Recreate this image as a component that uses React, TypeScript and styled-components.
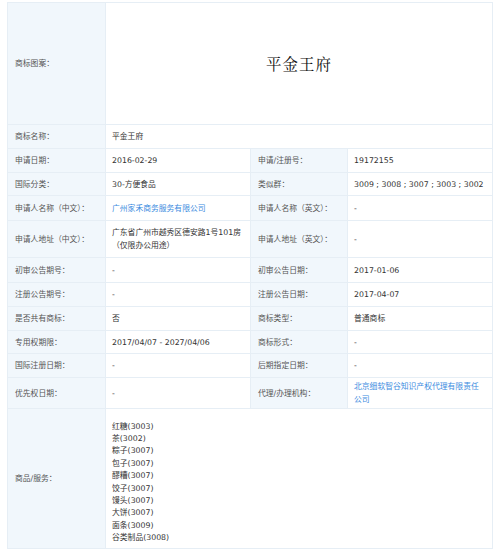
import React from "react";
import styled, { createGlobalStyle } from "styled-components";

const Global = createGlobalStyle`
  html, body { margin: 0; padding: 0; background: #ffffff; }
  body { font-family: "DejaVu Sans", "Noto Sans CJK SC", sans-serif; }
`;

const Page = styled.div`
  padding: 2px 8px 0 7px;
`;

const Table = styled.table`
  width: 485px;
  table-layout: fixed;
  border-collapse: collapse;
  font-family: "DejaVu Sans", "Noto Sans CJK SC", sans-serif;
  font-size: 7.8px;
  line-height: 13px;
`;

const Row = styled.tr<{ $h: number }>`
  height: ${(p) => p.$h}px;
`;

const LabelCell = styled.td`
  background: #f1f7fc;
  color: #555555;
  padding: 0 4px 0 7px;
  border: 1px solid #e6eef5;
  vertical-align: middle;
  white-space: nowrap;
`;

const ValueCell = styled.td`
  background: #ffffff;
  color: #333333;
  padding: 0 6px 0 6px;
  border: 1px solid #e6eef5;
  vertical-align: middle;
`;

const MarkCell = styled(ValueCell)`
  text-align: center;
  padding-top: 3px;
`;

const MarkText = styled.span`
  font-family: "Noto Serif CJK SC", "Noto Sans CJK SC", serif;
  font-size: 15.5px;
  color: #111111;
  letter-spacing: 1px;
`;

const Link = styled.span`
  color: #3b8be0;
`;

const GoodsList = styled.div`
  display: flex;
  flex-direction: column;
  line-height: 12.35px;
  padding: 11px 0 3px;
`;

const goods = [
  "红糖(3003)",
  "茶(3002)",
  "粽子(3007)",
  "包子(3007)",
  "醪糟(3007)",
  "饺子(3007)",
  "馒头(3007)",
  "大饼(3007)",
  "面条(3009)",
  "谷类制品(3008)",
];

type Pair = [string, React.ReactNode, string, React.ReactNode, number];

const pairs: Pair[] = [
  ["申请日期：", "2016-02-29", "申请/注册号：", "19172155", 24],
  ["国际分类：", "30-方便食品", "类似群：", "3009 ; 3008 ; 3007 ; 3003 ; 3002", 23],
  ["申请人名称（中文）：", <Link>广州家禾商务服务有限公司</Link>, "申请人名称（英文）：", "-", 25],
  ["申请人地址（中文）：", "广东省广州市越秀区德安路1号101房（仅限办公用途）", "申请人地址（英文）：", "-", 37],
  ["初审公告期号：", "-", "初审公告日期：", "2017-01-06", 25],
  ["注册公告期号：", "-", "注册公告日期：", "2017-04-07", 24],
  ["是否共有商标：", "否", "商标类型：", "普通商标", 24],
  ["专用权期限：", "2017/04/07 - 2027/04/06", "商标形式：", "-", 23],
  ["国际注册日期：", "-", "后期指定日期：", "-", 24],
  ["优先权日期：", "-", "代理/办理机构：", <Link>北京细软智谷知识产权代理有限责任公司</Link>, 31],
];

export default function App() {
  return (
    <>
      <Global />
      <Page>
        <Table>
          <colgroup>
            <col style={{ width: 98 }} />
            <col style={{ width: 145 }} />
            <col style={{ width: 97 }} />
            <col style={{ width: 145 }} />
          </colgroup>
          <tbody>
            <Row $h={122}>
              <LabelCell>商标图案：</LabelCell>
              <MarkCell colSpan={3}>
                <MarkText>平金王府</MarkText>
              </MarkCell>
            </Row>
            <Row $h={24}>
              <LabelCell>商标名称：</LabelCell>
              <ValueCell colSpan={3}>平金王府</ValueCell>
            </Row>
            {pairs.map(([l1, v1, l2, v2, h], i) => (
              <Row $h={h} key={i}>
                <LabelCell>{l1}</LabelCell>
                <ValueCell>{v1}</ValueCell>
                <LabelCell>{l2}</LabelCell>
                <ValueCell>{v2}</ValueCell>
              </Row>
            ))}
            <Row $h={140}>
              <LabelCell>商品/服务：</LabelCell>
              <ValueCell colSpan={3}>
                <GoodsList>
                  {goods.map((g) => (
                    <span key={g}>{g}</span>
                  ))}
                </GoodsList>
              </ValueCell>
            </Row>
          </tbody>
        </Table>
      </Page>
    </>
  );
}
